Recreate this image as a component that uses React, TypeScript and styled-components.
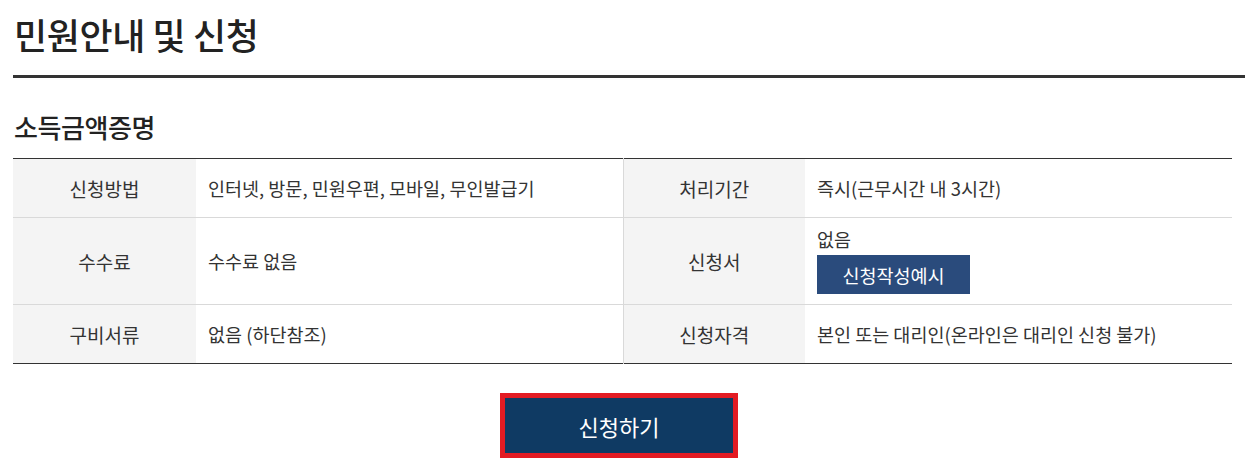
import React from "react";
import styled, { createGlobalStyle } from "styled-components";

const GlobalStyle = createGlobalStyle`
  html, body {
    margin: 0;
    padding: 0;
    background: #fff;
  }
  body {
    font-family: "Noto Sans CJK KR", "Noto Sans", sans-serif;
    color: #333;
  }
`;

const Page = styled.div`
  padding: 0 0 0 13px;
`;

const PageTitle = styled.h2`
  margin: 0;
  padding: 8px 0 14px 1px;
  font-size: 36px;
  line-height: 53px;
  font-weight: 500;
  letter-spacing: -0.4px;
  color: #222;
  border-bottom: 3px solid #333;
`;

const SectionTitle = styled.h3`
  margin: 0;
  padding: 33px 0 15px 1px;
  font-size: 26px;
  line-height: 32px;
  font-weight: 500;
  letter-spacing: -0.4px;
  color: #222;
`;

const InfoTable = styled.table`
  width: 1219px;
  border-collapse: collapse;
  table-layout: fixed;
  border-top: 1px solid #333;
  border-bottom: 1px solid #333;
  font-size: 18.5px;
`;

const Row = styled.tr<{ $tall?: boolean }>`
  height: ${(p) => (p.$tall ? 87 : 59)}px;
  border-bottom: 1px solid #d9d9d9;
  &:last-child {
    border-bottom: none;
  }
`;

const Th = styled.th<{ $divider?: boolean }>`
  background: #f4f4f4;
  font-weight: 400;
  font-size: 19px;
  color: #333;
  text-align: center;
  vertical-align: middle;
  padding: 0 10px;
  border-left: ${(p) => (p.$divider ? "1px solid #d9d9d9" : "none")};
`;

const Td = styled.td`
  text-align: left;
  vertical-align: middle;
  padding: 6px 12px;
  line-height: 22px;
  color: #333;
`;

const SmallButton = styled.button`
  display: block;
  margin-top: 5px;
  width: 153px;
  height: 39px;
  border: 0;
  background: #2a4b7c;
  color: #fff;
  font-family: inherit;
  font-size: 18.5px;
  cursor: pointer;
`;

const ButtonBar = styled.div`
  width: 1219px;
  display: flex;
  justify-content: center;
  padding-top: 29px;
`;

const ApplyButton = styled.button`
  box-sizing: border-box;
  width: 238px;
  height: 65px;
  margin-right: 7px;
  border: 5px solid #e31b23;
  background: #0f3a63;
  color: #fff;
  font-family: inherit;
  font-size: 22px;
  cursor: pointer;
`;

const App: React.FC = () => {
  return (
    <Page>
      <GlobalStyle />
      <PageTitle>민원안내 및 신청</PageTitle>
      <SectionTitle>소득금액증명</SectionTitle>
      <InfoTable>
        <colgroup>
          <col style={{ width: 183 }} />
          <col style={{ width: 427 }} />
          <col style={{ width: 182 }} />
          <col style={{ width: 427 }} />
        </colgroup>
        <tbody>
          <Row>
            <Th>신청방법</Th>
            <Td>인터넷, 방문, 민원우편, 모바일, 무인발급기</Td>
            <Th $divider>처리기간</Th>
            <Td>즉시(근무시간 내 3시간)</Td>
          </Row>
          <Row $tall>
            <Th>수수료</Th>
            <Td>수수료 없음</Td>
            <Th $divider>신청서</Th>
            <Td>
              없음
              <SmallButton type="button">신청작성예시</SmallButton>
            </Td>
          </Row>
          <Row>
            <Th>구비서류</Th>
            <Td>없음 (하단참조)</Td>
            <Th $divider>신청자격</Th>
            <Td>본인 또는 대리인(온라인은 대리인 신청 불가)</Td>
          </Row>
        </tbody>
      </InfoTable>
      <ButtonBar>
        <ApplyButton type="button">신청하기</ApplyButton>
      </ButtonBar>
    </Page>
  );
};

export default App;
